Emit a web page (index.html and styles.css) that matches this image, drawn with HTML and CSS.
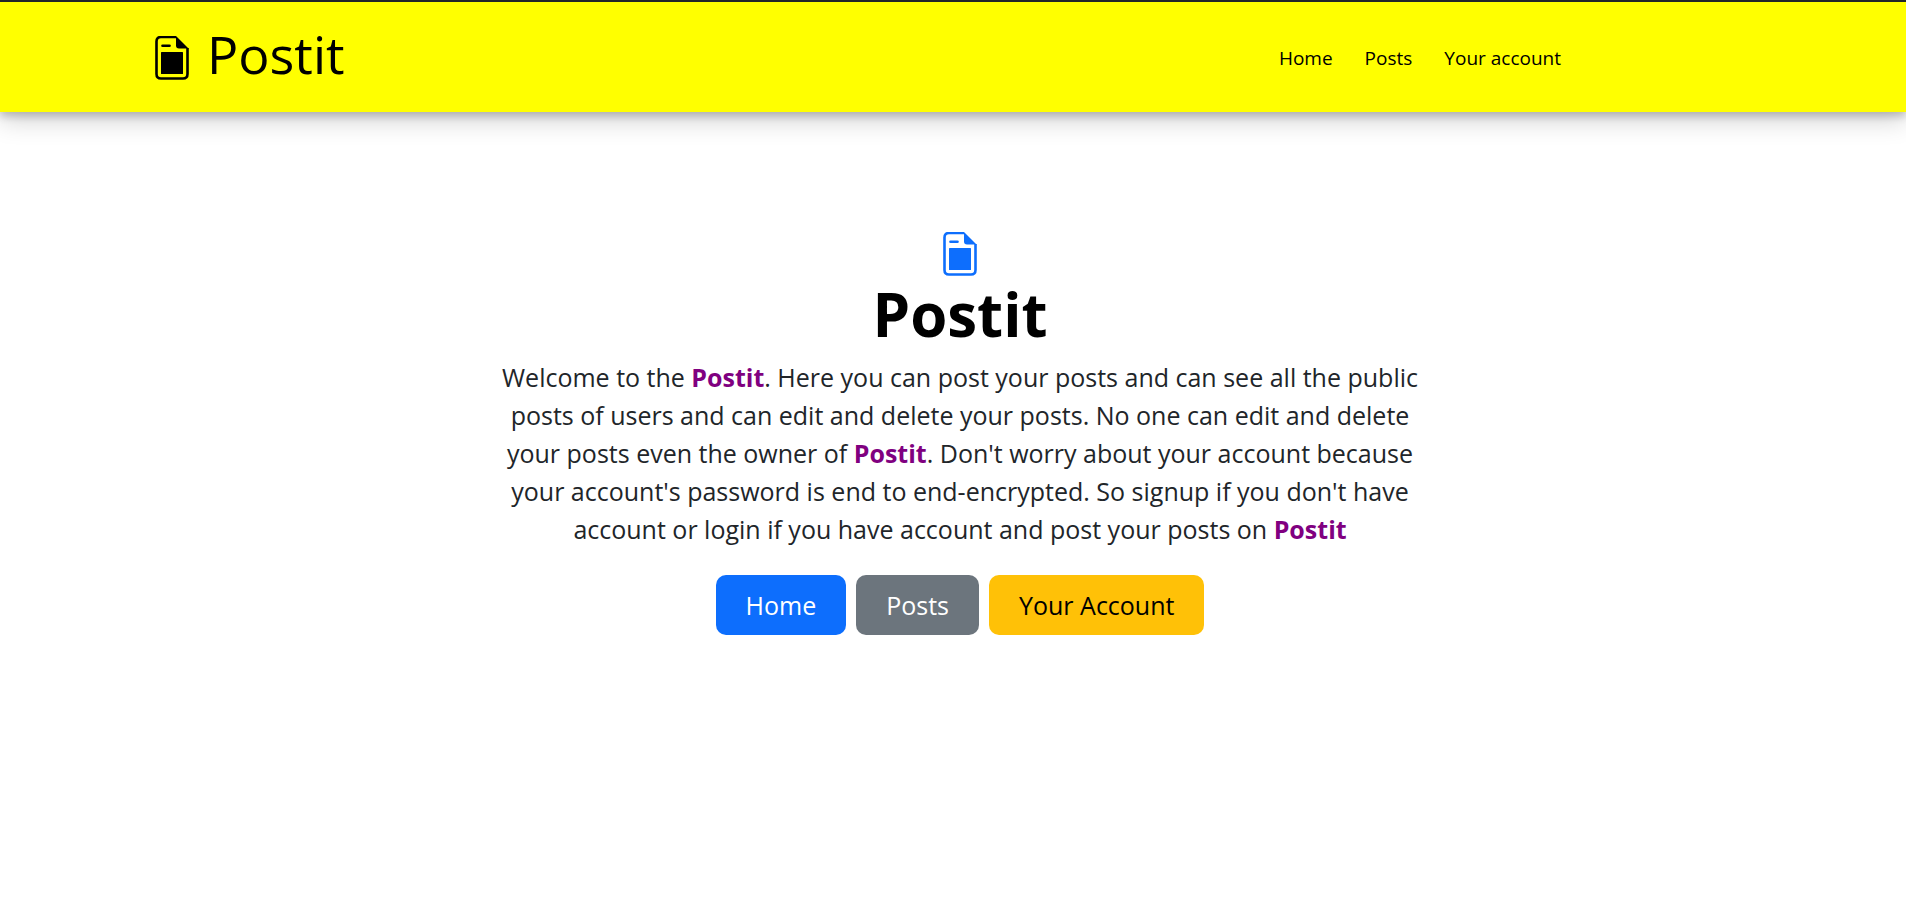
FILE: index.html
```html
<!DOCTYPE html>
<html lang="en">
<head>
<meta charset="utf-8">
<title>Postit</title>
<link rel="stylesheet" href="styles.css">
</head>
<body>
<svg class="sprite" aria-hidden="true">
  <symbol id="note" viewBox="0 0 34 44">
    <path d="M21 1H6Q1.500 1 1.500 5.500V38Q1.500 42.500 6 42.500H28Q32.500 42.500 32.500 38V12" fill="none" stroke="currentColor" stroke-width="2.600"/>
    <path d="M21 0L33.500 12.500H24Q21 12.500 21 9.500Z" fill="currentColor"/>
    <path d="M7.500 9.700H14.500" stroke="currentColor" stroke-width="2.600" stroke-linecap="round"/>
    <rect x="6" y="16" width="22" height="22" rx="0.500" fill="currentColor"/>
  </symbol>
</svg>
<header class="header">
  <a class="brand" href="#">
    <svg class="icon" aria-hidden="true"><use href="#note"/></svg>
    <span class="brand-name">Postit</span>
  </a>
  <nav class="nav">
    <a href="#">Home</a>
    <a href="#">Posts</a>
    <a href="#">Your account</a>
  </nav>
</header>
<main class="hero">
  <svg class="icon icon-blue" aria-hidden="true"><use href="#note"/></svg>
  <h1 class="title">Postit</h1>
  <p class="lead">Welcome to the <b>Postit</b>. Here you can post your posts and can see all the public posts of users and can edit and delete your posts. No one can edit and delete your posts even the owner of <b>Postit</b>. Don't worry about your account because your account's password is end to end-encrypted. So signup if you don't have account or login if you have account and post your posts on <b>Postit</b></p>
  <div class="actions">
    <button type="button" class="btn btn-primary">Home</button>
    <button type="button" class="btn btn-secondary">Posts</button>
    <button type="button" class="btn btn-warning">Your Account</button>
  </div>
</main>
</body>
</html>
```
FILE: styles.css
```css
* { box-sizing: border-box; }
body {
  margin: 0;
  background: #fff;
  color: #212529;
  font-family: "Comic Sans MS", "Open Sans", sans-serif;
}
.sprite { position: absolute; width: 0; height: 0; }
.header {
  display: flex;
  align-items: center;
  justify-content: space-between;
  min-height: 112px;
  padding: 2px 345px 0 155px;
  border-top: 2px solid #212529;
  background: #ff0;
  box-shadow: 0 4px 8px rgba(0, 0, 0, 0.2), 0 8px 24px rgba(0, 0, 0, 0.19);
}
.brand {
  display: flex;
  align-items: center;
  gap: 18px;
  color: #000;
  text-decoration: none;
}
.brand-name { font-size: 52px; line-height: 64px; padding-bottom: 8px; }
.icon { display: block; width: 34px; height: 44px; }
.icon-blue { color: #0d6efd; }
.nav { display: flex; gap: 32px; font-size: 19px; line-height: 30px; }
.nav a { color: #000; text-decoration: none; }
.hero {
  display: flex;
  flex-direction: column;
  align-items: center;
  padding: 120px 24px 48px 38px;
  text-align: center;
}
.title { margin: 0; color: #000; font-size: 60px; line-height: 76px; font-weight: 700; }
.lead { max-width: 930px; margin: 6px 0 27px; font-size: 25px; line-height: 38px; }
.lead b { color: purple; }
.actions { display: flex; flex-wrap: wrap; justify-content: center; gap: 10px; }
.btn {
  padding: 11px 30px;
  border: 0;
  border-radius: 10px;
  font-family: inherit;
  font-size: 25px;
  line-height: 38px;
  color: #fff;
}
.btn-primary { background: #0d6efd; }
.btn-secondary { background: #6c757d; }
.btn-warning { background: #ffc107; color: #000; }
```
